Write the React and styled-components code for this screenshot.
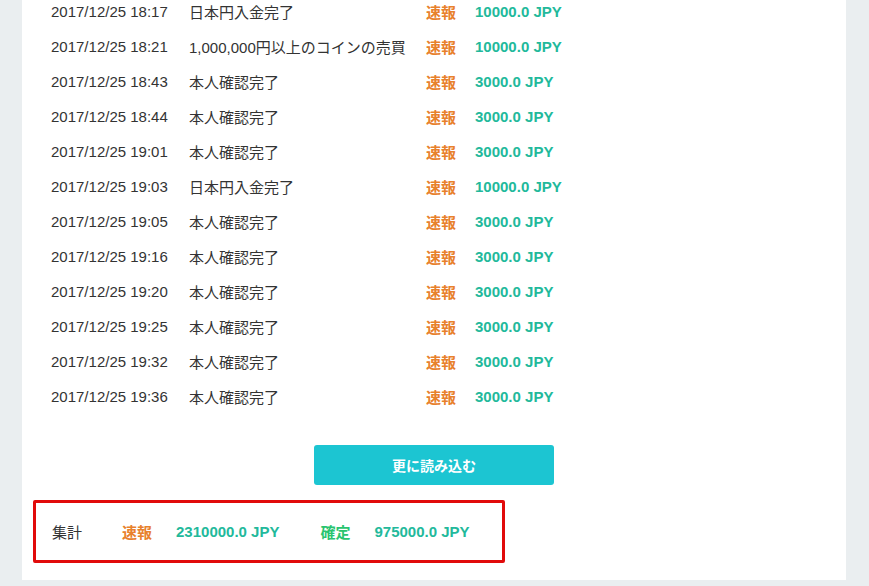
import styled, { createGlobalStyle } from "styled-components"

const GlobalStyle = createGlobalStyle`
  html, body {
    margin: 0;
    padding: 0;
    background: #eaeef0;
    overflow: hidden;
  }
  body {
    font-family: "Liberation Sans", "Noto Sans CJK JP", Arial, sans-serif;
    color: #333;
  }
`

const rows = [
  ["2017/12/25 18:17", "日本円入金完了", "10000.0 JPY"],
  ["2017/12/25 18:21", "1,000,000円以上のコインの売買", "10000.0 JPY"],
  ["2017/12/25 18:43", "本人確認完了", "3000.0 JPY"],
  ["2017/12/25 18:44", "本人確認完了", "3000.0 JPY"],
  ["2017/12/25 19:01", "本人確認完了", "3000.0 JPY"],
  ["2017/12/25 19:03", "日本円入金完了", "10000.0 JPY"],
  ["2017/12/25 19:05", "本人確認完了", "3000.0 JPY"],
  ["2017/12/25 19:16", "本人確認完了", "3000.0 JPY"],
  ["2017/12/25 19:20", "本人確認完了", "3000.0 JPY"],
  ["2017/12/25 19:25", "本人確認完了", "3000.0 JPY"],
  ["2017/12/25 19:32", "本人確認完了", "3000.0 JPY"],
  ["2017/12/25 19:36", "本人確認完了", "3000.0 JPY"],
]

const App = () => {
  return (
    <Page>
      <GlobalStyle />
      <Card>
        <List>
          {rows.map(([date, desc, amount], i) => (
            <Row key={i}>
              <span>{date}</span>
              <span>{desc}</span>
              <Tag $tone="orange">速報</Tag>
              <Amount>{amount}</Amount>
            </Row>
          ))}
        </List>
        <ButtonWrap>
          <MoreButton>更に読み込む</MoreButton>
        </ButtonWrap>
        <Summary>
          <SummaryLabel>集計</SummaryLabel>
          <Tag $tone="orange">速報</Tag>
          <Amount $wide>2310000.0 JPY</Amount>
          <Tag $tone="green">確定</Tag>
          <Amount>975000.0 JPY</Amount>
        </Summary>
      </Card>
    </Page>
  )
}
export default App

const Page = styled.div`
  padding: 0 23px 6px 22px;
  height: 586px;
  box-sizing: border-box;
  display: flex;
  flex-direction: column;
  justify-content: flex-end;
`

const Card = styled.div`
  background: #fff;
  padding: 0 0 17px 11px;
`

const List = styled.div`
  display: flex;
  flex-direction: column;
  padding-left: 18px;
`

const Row = styled.div`
  display: grid;
  grid-template-columns: 138px 237px 49px auto;
  align-items: center;
  height: 35px;
  font-size: 15px;
  white-space: nowrap;
`

const Tag = styled.span`
  font-weight: bold;
  font-size: 15px;
  color: ${(p) => (p.$tone === "green" ? "#29c46f" : "#e8812c")};
`

const Amount = styled.span`
  font-weight: bold;
  font-size: 15px;
  color: #22b99b;
  margin-right: ${(p) => (p.$wide ? "41px" : "0")};
`

const ButtonWrap = styled.div`
  display: flex;
  padding: 31px 0 15px 281px;
`

const MoreButton = styled.button`
  width: 240px;
  height: 40px;
  border: none;
  border-radius: 3px;
  background: #1cc5d2;
  color: #fff;
  font-family: "Noto Sans CJK JP", sans-serif;
  font-weight: bold;
  font-size: 14px;
`

const Summary = styled.div`
  width: 472px;
  height: 63px;
  box-sizing: border-box;
  border: 3px solid #e10b0b;
  border-radius: 2px;
  display: flex;
  align-items: center;
  padding: 0 0 0 16px;
  font-size: 15px;
  white-space: nowrap;

  ${Tag} {
    margin-right: 24px;
  }
`

const SummaryLabel = styled.span`
  width: 70px;
`
